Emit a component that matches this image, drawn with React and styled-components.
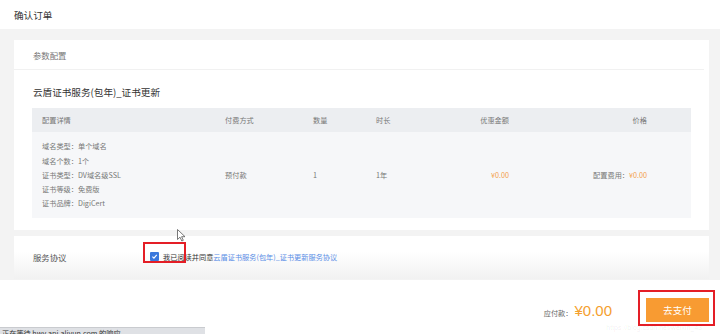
import React from 'react';
import styled, { createGlobalStyle } from 'styled-components';

const GlobalStyle = createGlobalStyle`
  html, body {
    margin: 0;
    padding: 0;
    background: #fff;
    font-family: "Noto Sans CJK SC", "Noto Sans", sans-serif;
    color: #333;
    overflow: hidden;
  }
`;

const Page = styled.div`
  position: relative;
  width: 720px;
  height: 334px;
  overflow: hidden;
`;

const Header = styled.div`
  height: 29px;
  display: flex;
  align-items: center;
  padding-left: 14px;
  font-size: 9.6px;
  color: #333;
`;

const Main = styled.div`
  background: #f3f3f3;
  padding: 11px 11px 1px 14px;
  display: flex;
  flex-direction: column;
  gap: 6px;
`;

const Card = styled.div`
  background: #fff;
  padding: 0 18px 12px;
`;

const SectionTitle = styled.div`
  height: 29px;
  margin: 0 -13px 0 -18px;
  padding-left: 19px;
  display: flex;
  align-items: center;
  font-size: 8.4px;
  color: #777;
  border-bottom: 1px solid #f1f1f1;
`;

const ProductName = styled.div`
  font-size: 9.6px;
  color: #333;
  padding: 15px 0 0 1px;
  line-height: 14px;
  margin-bottom: 9px;
`;

const Table = styled.div`
  display: grid;
  grid-template-columns: 193px 88px 63px 73px 60px 138px;
  padding-right: 44px;
  font-size: 7.2px;
  color: #777;
  background: #f6f7f9;
`;

const HeadCell = styled.div`
  height: 24px;
  display: flex;
  align-items: center;
  justify-content: ${p => (p.$right ? 'flex-end' : 'flex-start')};
  padding-left: ${p => (p.$first ? '10px' : '0')};
  background: #eceef1;
  color: #777;
  ${p => p.$last && 'margin-right: -44px; padding-right: 44px;'}
`;

const BodyCell = styled.div`
  height: 86px;
  display: flex;
  align-items: center;
  justify-content: ${p => (p.$right ? 'flex-end' : 'flex-start')};
  padding-left: ${p => (p.$first ? '10px' : '0')};
  color: ${p => (p.$orange ? '#f4a04a' : '#777')};
`;

const SpecList = styled.div`
  display: flex;
  flex-direction: column;
  line-height: 14.3px;
`;

const Orange = styled.span`
  color: #f4a04a;
`;

const AgreeCard = styled.div`
  height: 43px;
  display: flex;
  align-items: center;
  padding: 0 0 2px 19px;
  box-sizing: border-box;
  background: linear-gradient(#fff 35%, #f1f1f1 100%);
`;

const AgreeLabel = styled.div`
  width: 117px;
  font-size: 8.4px;
  color: #555;
`;

const AgreeText = styled.div`
  position: relative;
  display: flex;
  align-items: center;
  font-size: 7.2px;
  color: #333;
`;

const CheckBox = styled.span`
  width: 9px;
  height: 9px;
  border-radius: 1px;
  background: #3b78dc;
  display: flex;
  align-items: center;
  justify-content: center;
  margin-right: 4px;
`;

const Link = styled.span`
  color: #5a8ee6;
`;

const Highlight = styled.div`
  position: absolute;
  border: 2px solid #e41e26;
  left: ${p => p.$x}px;
  top: ${p => p.$y}px;
  width: ${p => p.$w}px;
  height: ${p => p.$h}px;
  box-sizing: border-box;
  pointer-events: none;
`;

const Footer = styled.div`
  height: 60px;
  display: flex;
  align-items: center;
  justify-content: flex-end;
  padding-right: 11px;
`;

const DueLabel = styled.span`
  font-size: 7.2px;
  color: #666;
  margin-right: 2px;
  margin-top: 5px;
`;

const DueAmount = styled.span`
  font-size: 15px;
  color: #f5a02e;
  margin-right: 34px;
  font-family: "Liberation Sans", sans-serif;
`;

const PayButton = styled.button`
  width: 63px;
  height: 24px;
  border: none;
  background: #f89b32;
  color: #fff;
  font-family: inherit;
  font-size: 9.6px;
  padding: 0;
`;

const PayWrap = styled.div`
  position: relative;
  display: flex;
`;

const StatusBubble = styled.div`
  position: absolute;
  left: 0;
  bottom: 0;
  width: 203px;
  height: 6px;
  padding-left: 2px;
  background: #dfe1e5;
  border-top: 1px solid #c9cbcf;
  font-size: 7.2px;
  line-height: 11px;
  color: #333;
  white-space: nowrap;
  overflow: hidden;
`;

const Watermark = styled.div`
  position: absolute;
  right: 18px;
  bottom: 3px;
  font-size: 7px;
  color: rgba(0, 0, 0, 0.07);
  font-family: "Liberation Sans", sans-serif;
`;

const Cursor = styled.svg`
  position: absolute;
  left: 177px;
  top: 229px;
`;

const specs = [
  '域名类型：单个域名',
  '域名个数：1个',
  '证书类型：DV域名级SSL',
  '证书等级：免费版',
  '证书品牌：DigiCert',
];

const App = () => (
  <Page>
    <GlobalStyle />
    <Header>确认订单</Header>
    <Main>
      <Card>
        <SectionTitle>参数配置</SectionTitle>
        <ProductName>云盾证书服务(包年)_证书更新</ProductName>
        <Table>
          <HeadCell $first>配置详情</HeadCell>
          <HeadCell>付费方式</HeadCell>
          <HeadCell>数量</HeadCell>
          <HeadCell>时长</HeadCell>
          <HeadCell $right>优惠金额</HeadCell>
          <HeadCell $right $last>价格</HeadCell>

          <BodyCell $first>
            <SpecList>
              {specs.map(s => <span key={s}>{s}</span>)}
            </SpecList>
          </BodyCell>
          <BodyCell>预付款</BodyCell>
          <BodyCell>1</BodyCell>
          <BodyCell>1年</BodyCell>
          <BodyCell $right $orange>¥0.00</BodyCell>
          <BodyCell $right>配置费用：<Orange>¥0.00</Orange></BodyCell>
        </Table>
      </Card>
      <AgreeCard>
        <AgreeLabel>服务协议</AgreeLabel>
        <AgreeText>
          <CheckBox>
            <svg width="7" height="7" viewBox="0 0 10 10">
              <path d="M2 5.2 L4.2 7.4 L8.2 2.6" fill="none" stroke="#fff" strokeWidth="1.6" />
            </svg>
          </CheckBox>
          我已阅读并同意<Link>云盾证书服务(包年)_证书更新服务协议</Link>
          <Highlight $x={-7} $y={-10} $w={43} $h={21} />
        </AgreeText>
      </AgreeCard>
    </Main>
    <Footer>
      <DueLabel>应付款：</DueLabel>
      <DueAmount>¥0.00</DueAmount>
      <PayWrap>
        <PayButton>去支付</PayButton>
        <Highlight $x={-8} $y={-8} $w={77} $h={36} />
      </PayWrap>
    </Footer>
    <Watermark>https://blog.csdn.net/weixin_43</Watermark>
    <StatusBubble>正在等待 hwy.api.aliyun.com 的响应...</StatusBubble>
    <Cursor width="9" height="13" viewBox="0 0 9 13">
      <path d="M0.5 0.5 L0.5 10.5 L3 8.2 L4.8 12 L6.3 11.3 L4.6 7.7 L8 7.7 Z" fill="#fff" stroke="#555" strokeWidth="0.8" />
    </Cursor>
  </Page>
);

export default App;
